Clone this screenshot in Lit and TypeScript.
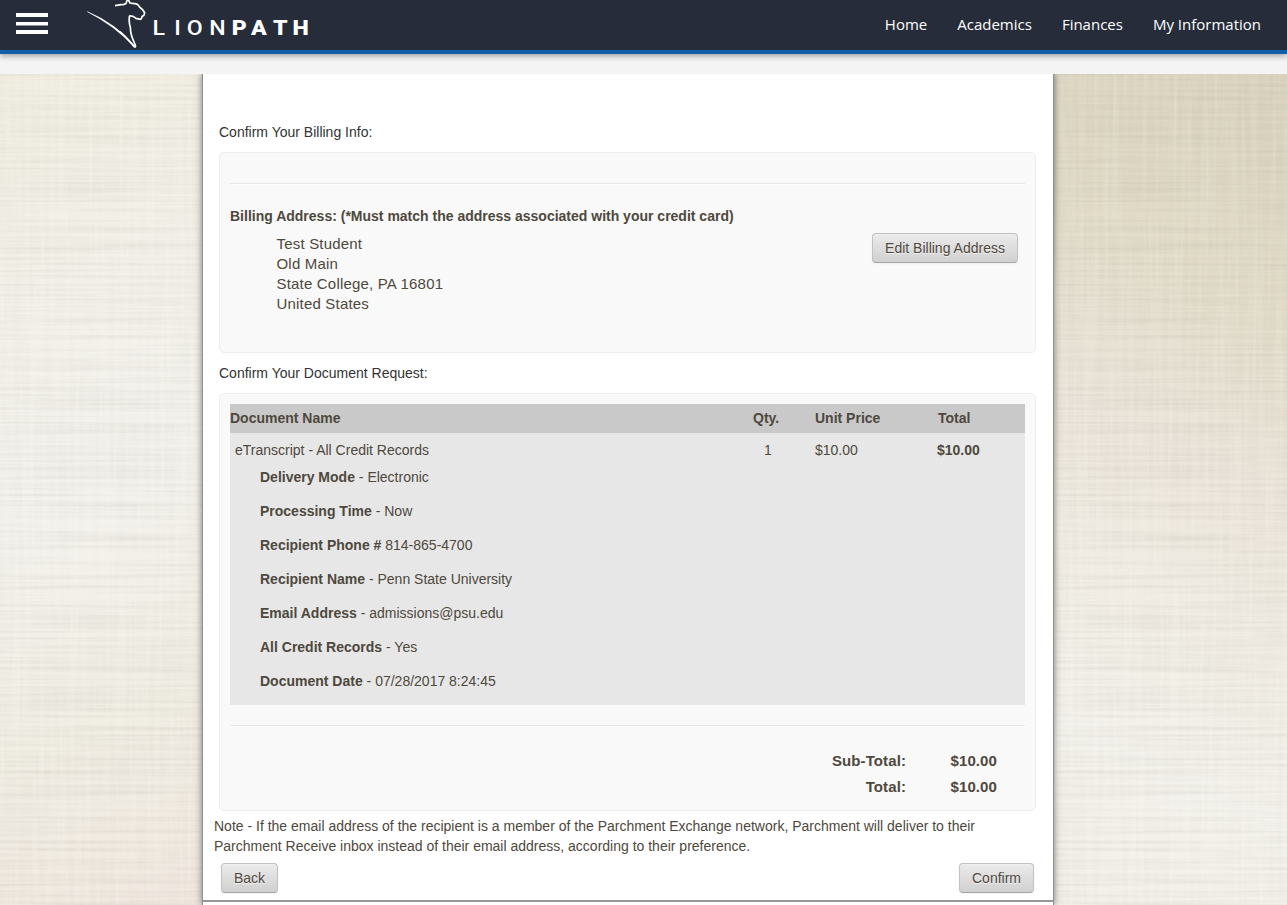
import { LitElement, html, css, svg } from "lit";
import { customElement } from "lit/decorators.js";

const details: [string, string][] = [
  ["Delivery Mode", " - Electronic"],
  ["Processing Time", " - Now"],
  ["Recipient Phone #", " 814-865-4700"],
  ["Recipient Name", " - Penn State University"],
  ["Email Address", " - admissions@psu.edu"],
  ["All Credit Records", " - Yes"],
  ["Document Date", " - 07/28/2017 8:24:45"],
];

@customElement("linen-side")
class LinenSide extends LitElement {
  static styles = css`
    :host { display: block; overflow: hidden; }
    .weave { display: block; width: 100%; height: 100%; opacity: .42; }
  `;
  render() {
    return html`<svg class="weave" preserveAspectRatio="none">
      ${svg`<filter id="rows" x="0" y="0" width="100%" height="100%" color-interpolation-filters="sRGB">
        <feTurbulence type="fractalNoise" baseFrequency="0.005 0.3" numOctaves="3" seed="4"></feTurbulence>
        <feColorMatrix values="0 0 0 0 0.5  0 0 0 0 0.48  0 0 0 0 0.44  0.55 0 0 0 -0.2"></feColorMatrix>
      </filter>
      <filter id="cols" x="0" y="0" width="100%" height="100%" color-interpolation-filters="sRGB">
        <feTurbulence type="fractalNoise" baseFrequency="0.2 0.006" numOctaves="3" seed="9"></feTurbulence>
        <feColorMatrix values="0 0 0 0 1  0 0 0 0 1  0 0 0 0 0.96  0.9 0 0 0 -0.36"></feColorMatrix>
      </filter>
      <rect width="100%" height="100%" filter="url(#rows)"></rect>
      <rect width="100%" height="100%" filter="url(#cols)"></rect>`}
    </svg>`;
  }
}

@customElement("app-root")
class AppRoot extends LitElement {
  static styles = css`
    :host { display: flex; flex-direction: column; height: 905px; overflow: hidden; background: #f4f4f4;
      font: 14px/20px "Liberation Sans", Arial, sans-serif; color: #4e483d; }
    * { box-sizing: border-box; }
    header { flex: none; display: flex; height: 54px; background: #262c3a; border-bottom: 4px solid #125ea8;
      box-shadow: 0 2px 6px rgba(0,0,0,.35); margin-bottom: 20px; }
    .brand { display: block; width: 330px; height: 50px; }
    .wordmark { font-family: Roboto, sans-serif; font-size: 19.6px; font-weight: 500; fill: #fff; }
    .heavy { font-weight: 900; }
    nav { margin-left: auto; display: flex; gap: 30px; padding-right: 26px; line-height: 48px;
      font-family: "Open Sans", sans-serif; font-size: 15px; color: #fff; }
    main { flex: 1; min-height: 0; display: grid; grid-template-columns: 202px 852px 233px; }
    .left { background: linear-gradient(160deg, #f0ede1 0%, #f2f0e9 30%, #f3f1ec 50%, #f0eee4 72%, #f0e7df 100%); }
    .right { background: linear-gradient(205deg, #d8d2bd 0%, #e1dbc8 25%, #ebe4da 45%, #f0ece3 62%, #f3f1eb 80%, #f2efe8 100%); }
    .sheet { position: relative; background: #fff; border: solid #8d8f90; border-width: 0 1px; box-shadow: 0 0 7px rgba(0,0,0,.5);
      display: flex; flex-direction: column; padding: 48px 17px 0 16px; clip-path: inset(0 -10px); }
    .title { color: #333; margin-bottom: 10px; }
    .card { flex: none; background: #f9f9f9; border: 1px solid #eee; border-radius: 5px; padding: 10px; }
    .billing { height: 201px; margin-bottom: 10px; padding-top: 30px; }
    .rule { height: 2px; background: #fff; border-top: 1px solid #e6e6e6; }
    .who { display: flex; justify-content: space-between; padding-right: 7px; }
    .address { padding: 8px 0 0 46.5px; font-size: 15px; letter-spacing: .19px; }
    .subtitle { margin-top: 21px; font-weight: bold; }
    .btn { font: inherit; color: #4e483d; height: 30px; padding: 0; border: 1px solid #c2c2c2; border-bottom-color: #a6a6a6;
      border-radius: 4px; background: linear-gradient(#ebebeb, #d0d0d0); text-shadow: 0 1px 1px rgba(255,255,255,.75);
      box-shadow: inset 0 1px 0 rgba(255,255,255,.2), 0 1px 2px rgba(0,0,0,.05); }
    .edit { width: 146px; margin-top: 7px; }
    .back { width: 57px; }
    .confirm { width: 75px; }
    .order { height: 418px; }
    .row { display: grid; grid-template-columns: 523px 62px 122px 1fr; }
    .head { height: 29px; background: #c9c9c9; font-weight: bold; line-height: 29px; }
    .last { padding-left: 1px; }
    .body { height: 272px; background: #e7e7e7; padding-top: 7px; margin-bottom: 20px; }
    .name { padding-left: 5px; }
    .qty { padding-left: 11px; }
    .detail { padding-left: 30px; height: 20px; margin: 7px 0 14px; }
    .detail + .detail { margin-top: 0; }
    .sums { display: grid; grid-template-columns: 676px 1fr; column-gap: 44.5px; row-gap: 6px; padding-top: 24px;
      font-size: 15px; font-weight: bold; letter-spacing: .1px; }
    .end { text-align: right; }
    .note { margin: 5px 0 7px -5px; }
    .actions { display: flex; justify-content: space-between; padding: 0 2px; }
    .footer { height: 2px; flex: none; background: #979797; margin: 7px -17px 0 -16px; }
  `;
  render() {
    return html`
      <header>
        <svg class="brand" viewBox="0 0 330 50">
          <path fill="#fff" d="M16 13h32v4H16zM16 22h32v3.600H16zM16 30h32v4H16z"></path>
          <path fill="#fff" d="M87.300 11.300Q116 23.500 135.300 46L134.500 47.500Q115 26 87.300 12z"></path>
          <path fill="none" stroke="#fff" stroke-width="1.700" stroke-linejoin="round" d="M120 31.500Q129 40 134 46.500Q136 48 135.300 45Q130 34 130.500 28Q128.500 22 129.500 16Q133 15.500 136 18.300L140.500 19.300Q142 18.500 142 16.500Q145 15 144.500 12.500Q142.500 9 139.500 7Q138 3.500 134 3.700L130 3Q129 1 128 -1M127.500 -1L126 3.500Q124 5 121 4.700L115 5.700"></path>
          <g transform="scale(1.180 1)">
            <text class="wordmark" y="34.800" x="129.300 147.700 158.200 177.300">LION</text>
            <text class="wordmark heavy" y="34.800" x="196.300 212.800 231.300 247.800">PATH</text>
          </g>
        </svg>
        <nav><span>Home</span><span>Academics</span><span>Finances</span><span>My Information</span></nav>
      </header>
      <main>
        <linen-side class="left"></linen-side>
        <section class="sheet">
          <div class="title">Confirm Your Billing Info:</div>
          <div class="card billing">
            <div class="rule"></div>
            <div class="subtitle">Billing Address: (*Must match the address associated with your credit card)</div>
            <div class="who">
              <div class="address"><div>Test Student</div><div>Old Main</div><div>State College, PA 16801</div><div>United States</div></div>
              <button class="btn edit">Edit Billing Address</button>
            </div>
          </div>
          <div class="title">Confirm Your Document Request:</div>
          <div class="card order">
            <div class="row head"><span>Document Name</span><span>Qty.</span><span>Unit Price</span><span class="last">Total</span></div>
            <div class="body">
              <div class="row"><span class="name">eTranscript - All Credit Records</span><span class="qty">1</span><span>$10.00</span><b>$10.00</b></div>
              ${details.map(([label, value]) => html`<div class="detail"><b>${label}</b>${value}</div>`)}
            </div>
            <div class="rule"></div>
            <div class="sums"><span class="end">Sub-Total:</span><span>$10.00</span><span class="end">Total:</span><span>$10.00</span></div>
          </div>
          <div class="note">Note - If the email address of the recipient is a member of the Parchment Exchange network, Parchment will deliver to their<br>Parchment Receive inbox instead of their email address, according to their preference.</div>
          <div class="actions"><button class="btn back">Back</button><button class="btn confirm">Confirm</button></div>
          <div class="footer"></div>
        </section>
        <linen-side class="right"></linen-side>
      </main>`;
  }
}
